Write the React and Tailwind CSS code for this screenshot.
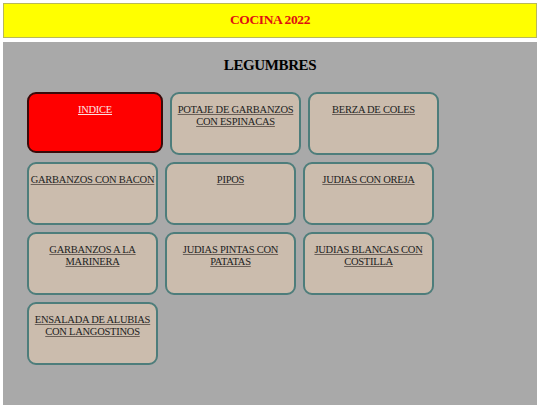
import React from 'react';

const RECIPES = [
    'POTAJE DE GARBANZOS CON ESPINACAS',
    'BERZA DE COLES',
    'GARBANZOS CON BACON',
    'PIPOS',
    'JUDIAS CON OREJA',
    'GARBANZOS A LA MARINERA',
    'JUDIAS PINTAS CON PATATAS',
    'JUDIAS BLANCAS CON COSTILLA',
    'ENSALADA DE ALUBIAS CON LANGOSTINOS',
];

const App = () => {
    return (
        <div className="min-h-[405px] bg-white px-[3px] pt-[3px]" style={{ fontFamily: '"Liberation Serif", "Times New Roman", serif' }}>
            {/* cabecera */}
            <div className="h-[35px] bg-[#ffff00] border border-[#b8b85a] flex items-center justify-center">
                <h1 className="text-[13.5px] tracking-[-0.4px] font-bold text-[#e01010]">COCINA 2022</h1>
            </div>

            <div className="mt-[4px] bg-[#a9a9a9] min-h-[363px] pl-[24px] pt-[13px]">
                <h2 className="text-[15px] tracking-[-0.4px] font-bold text-black text-center pr-[24px] leading-[20px]">LEGUMBRES</h2>

                <div className="mt-[17px] w-[420px] flex flex-wrap gap-x-[7px] gap-y-[7px] items-start">
                    <a href="#" className="w-[136px] h-[61px] bg-[#ff0000] border-2 border-[#3a0a0a] rounded-[9px] pt-[10px] text-center text-[10.5px] tracking-[-0.25px] leading-[12px] text-[#ffe0e0] underline">
                        INDICE
                    </a>
                    {RECIPES.map(r => (
                        <a key={r} href="#" className="w-[131px] h-[63px] bg-[#cbbcad] border-2 border-[#4d7d7b] rounded-[9px] pt-[10px] px-[1px] text-center text-[10.5px] tracking-[-0.25px] leading-[12px] text-[#222] underline decoration-[#6b6058]">
                            {r}
                        </a>
                    ))}
                </div>
            </div>
        </div>
    );
};

export default App;
